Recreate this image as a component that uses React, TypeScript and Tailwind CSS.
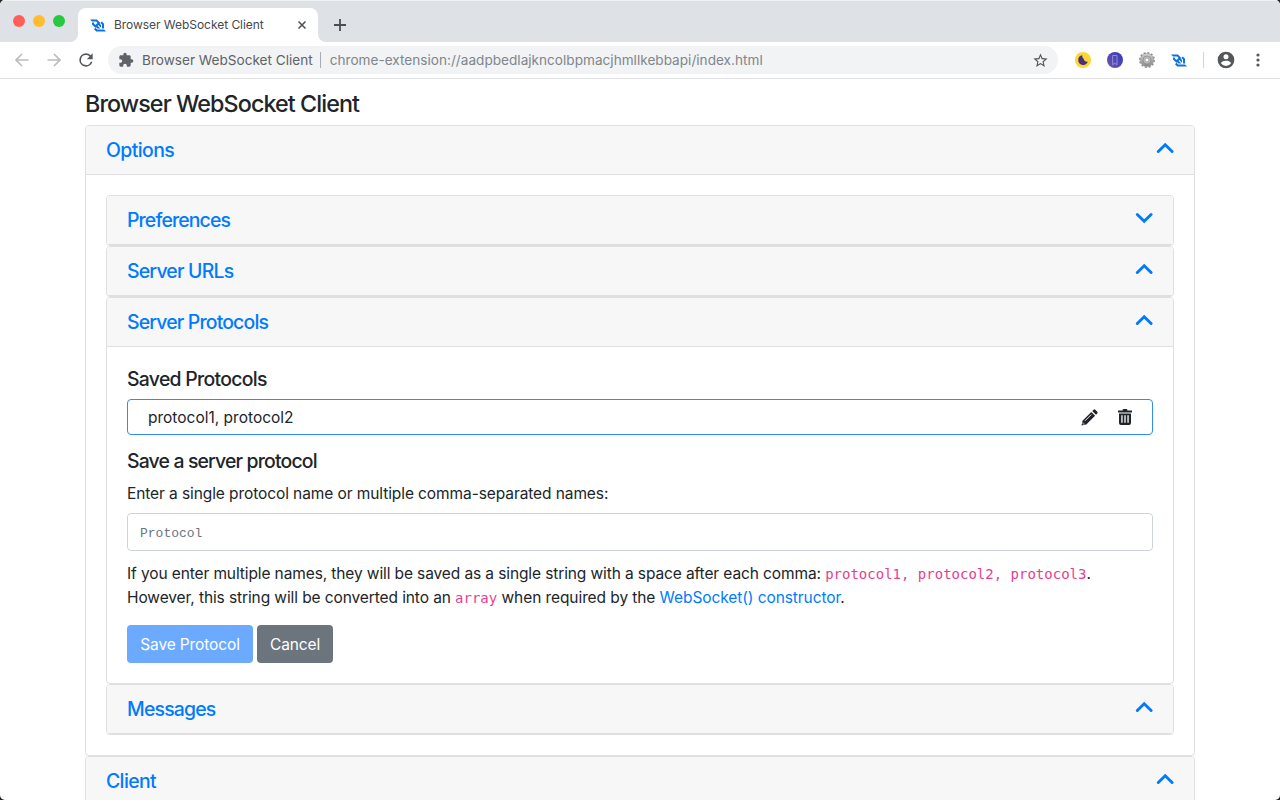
import type { ReactNode } from 'react';

function SocketLogo({ className }: { className: string }) {
  return (
    <svg viewBox="0 0 256 193" className={className} fill="#0b72e0">
      <path d="M192.44 144.64h31.78V68.34l-35.8-35.81-22.48 22.48 26.5 26.5v63.13zm31.86 15.94H113.45l-26.5-26.5 11.24-11.24 21.89 21.89h45.02l-44.35-44.44 11.32-11.32 44.35 44.35V88.3l-21.8-21.8 11.16-11.16L110.68 0H0l31.7 31.7v.08h65.74l23.22 23.23L86.7 88.97 63.48 65.74V47.71H31.7V78.9l55 55.01-22.39 22.39 35.81 35.8H256l-31.7-31.52z" />
    </svg>
  );
}

function Chevron({ down = false }: { down?: boolean }) {
  return (
    <svg width="18" height="12" viewBox="0 0 18 12" fill="none" stroke="#007bff" strokeWidth="2.9" className="relative -top-0.5">
      <path d={down ? 'M2.3 2.500 9.200 9.300l6.900-6.800' : 'M2.300 9.500l6.900-6.800 6.900 6.800'} strokeLinejoin="miter" strokeLinecap="round" />
    </svg>
  );
}

function Header({ title, track, down }: { title: string; track: string; down?: boolean }) {
  return (
    <div className="flex h-[49px] items-center justify-between border-b border-[#dfdfdf] bg-[#f7f7f7] px-5">
      <h2 className={`pb-px text-[19.4px] leading-6 font-[460] text-[#007bff] ${track}`}>{title}</h2>
      <Chevron down={down} />
    </div>
  );
}

function Card({ children }: { children: ReactNode }) {
  return (
    <section className="overflow-hidden rounded border border-[#dfdfdf] bg-white">
      {children}
    </section>
  );
}

function BrowserBar() {
  return (
    <header className="shrink-0">
      <div className="flex h-[42px] bg-[#dee1e6] shadow-[inset_0_1px_0_#f0f1f3]">
        <div className="flex w-[70px] gap-2 pt-[15px] pl-[13px]">
          <i className="size-3 rounded-full bg-[#ff5f57]" />
          <i className="size-3 rounded-full bg-[#febc2e]" />
          <i className="size-3 rounded-full bg-[#28c840]" />
        </div>
        <svg width="8" height="8" className="mt-[34px]" fill="#fff"><path d="M8 0v8H0a8 8 0 0 0 8-8z" /></svg>
        <div className="mt-2 flex w-60 items-center rounded-t-lg bg-white pl-3">
          <SocketLogo className="h-[13px] w-[16px]" />
          <span className="ml-2 text-[12px] tracking-[-0.04px] whitespace-nowrap text-[#45494d]">Browser WebSocket Client</span>
          <svg width="8" height="8" viewBox="0 0 8 8" stroke="#4b4f54" strokeWidth="1.5" className="mr-3 ml-auto"><path d="m.5.5 7 7m0-7-7 7" /></svg>
        </div>
        <svg width="8" height="8" className="mt-[34px]" fill="#fff"><path d="M0 0v8h8a8 8 0 0 1-8-8z" /></svg>
        <svg width="12" height="12" viewBox="0 0 12 12" stroke="#4b4f54" strokeWidth="1.8" className="mt-[19px] ml-2"><path d="M6 0v12M0 6h12" /></svg>
      </div>
      <div className="flex h-[37px] items-center border-b border-[#dfe0e2] bg-white pr-[18px] pl-[15px]">
        <svg width="14" height="14" viewBox="0 0 14 14" fill="none" stroke="#babcbe" strokeWidth="1.6"><path d="M13.5 7H1.5M7 1 1 7l6 6" /></svg>
        <svg width="14" height="14" viewBox="0 0 14 14" fill="none" stroke="#babcbe" strokeWidth="1.6" className="ml-[18px]"><path d="M.5 7h12M7 1l6 6-6 6" /></svg>
        <svg width="20" height="20" viewBox="0 0 24 24" fill="#54585d" className="ml-[15px]"><path d="M17.65 6.35A7.96 7.96 0 0 0 12 4a8 8 0 1 0 7.73 10h-2.08A6 6 0 1 1 12 6c1.66 0 3.14.69 4.22 1.78L13 11h7V4l-2.35 2.35z" /></svg>
        <div className="ml-[12px] flex h-7 w-[950px] items-center rounded-full bg-[#f1f3f4] pr-[9px] pl-[10px] text-[13.6px] whitespace-nowrap">
          <svg width="16" height="16" viewBox="0 0 24 24" fill="#5f6368"><path d="M20.5 11H19V7c0-1.100-.9-2-2-2h-4V3.500a2.500 2.500 0 0 0-5 0V5H4c-1.100 0-1.990.9-1.990 2v3.800H3.500c1.490 0 2.700 1.210 2.700 2.700s-1.210 2.700-2.700 2.700H2V20c0 1.100.9 2 2 2h3.800v-1.500c0-1.490 1.210-2.700 2.700-2.700 1.490 0 2.700 1.210 2.700 2.700V22H17c1.100 0 2-.9 2-2v-4h1.500a2.500 2.500 0 0 0 0-5z" /></svg>
          <span className="ml-[8px] text-[#5f6368]">Browser WebSocket Client</span>
          <i className="mr-[9px] ml-[7px] h-4 w-px bg-[#a9acb0]" />
          <span className="tracking-[0.01px] text-[#80868b]">chrome-extension://aadpbedlajkncolbpmacjhmllkebbapi/index.html</span>
          <svg width="17" height="17" viewBox="0 0 24 24" fill="#54585d" className="ml-auto"><path d="m22 9.240-7.190-.62L12 2 9.190 8.630 2 9.240l5.460 4.730L5.820 21 12 17.270 18.180 21l-1.630-7.030L22 9.240zM12 15.400l-3.760 2.270 1-4.280-3.320-2.880 4.380-.38L12 6.100l1.710 4.040 4.380.38-3.320 2.880 1 4.280L12 15.400z" /></svg>
        </div>
        <svg width="16" height="16" viewBox="0 0 16 16" className="ml-[17px]"><circle cx="8" cy="8" r="8" fill="#fdd535" /><path d="M7.300 3.200a4.900 4.900 0 1 0 5.500 6.300A3.200 3.200 0 0 1 8.700 7 3.500 3.500 0 0 1 7.300 3.200z" fill="#46307c" /></svg>
        <svg width="16" height="16" viewBox="0 0 16 16" className="ml-4">
          <defs><linearGradient id="mark" x1="1" y1="0" x2="0" y2="1"><stop stopColor="#3038c0" /><stop offset="1" stopColor="#7056a8" /></linearGradient></defs>
          <circle cx="8" cy="8" r="8" fill="url(#mark)" /><path d="M5.700 3.500h4.300v9.300L7.850 11.200 5.700 12.800z" fill="none" stroke="#a7a0e2" strokeWidth=".8" />
        </svg>
        <svg width="16" height="16" viewBox="0 0 16 16" className="ml-4">
          <defs><linearGradient id="steel" x1="0" y1="0" x2="0" y2="1"><stop stopColor="#cfcfcf" /><stop offset="1" stopColor="#888" /></linearGradient></defs>
          <circle cx="8" cy="8" r="7.200" fill="none" stroke="#8b8b8b" strokeWidth="1.500" strokeDasharray="2.170 1.600" />
          <circle cx="8" cy="8" r="6.600" fill="url(#steel)" stroke="#999" strokeWidth=".6" />
          <circle cx="8" cy="8" r="4" fill="#bdbdbd" stroke="#8a8a8a" strokeWidth=".7" />
          <circle cx="8" cy="8" r="2" fill="#fff" stroke="#999" strokeWidth=".8" />
        </svg>
        <SocketLogo className="ml-[16px] h-[13px] w-[16px]" />
        <i className="ml-4 h-4 w-px bg-[#d3d5d8]" />
        <svg width="20" height="20" viewBox="0 0 24 24" fill="#54585d" className="ml-[12px]"><path d="M12 2a10 10 0 1 0 0 20 10 10 0 0 0 0-20zm0 3a3 3 0 1 1 0 6 3 3 0 0 1 0-6zm0 14.200a7.200 7.200 0 0 1-6-3.220c.03-1.990 4-3.080 6-3.080s5.970 1.090 6 3.080a7.200 7.200 0 0 1-6 3.220z" /></svg>
        <svg width="4" height="14" viewBox="0 0 4 14" fill="#54585d" className="ml-[20px]"><circle cx="2" cy="2" r="1.600" /><circle cx="2" cy="7" r="1.600" /><circle cx="2" cy="12" r="1.600" /></svg>
      </div>
    </header>
  );
}

function ProtocolPanel() {
  return (
    <div className="h-[336px] px-5 pt-5 text-[15.5px] leading-6 text-[#212529]">
      <h3 className="text-[19.4px] leading-6 font-[460] tracking-[-0.7px]">Saved Protocols</h3>
      <div className="mt-2 flex h-9 items-center rounded border border-[#2f8cf0] pr-5 pl-[20px]">
        <span className="pt-0.5">protocol1, protocol2</span>
        <svg width="17" height="17" viewBox="0 0 17 17" className="ml-auto" fill="#212529">
          <path d="M.5 16.500 1.500 11.700 10.300 2.900 14.100 6.700 5.300 15.500zM11.200 2 12.600.7q.9-.7 1.700 0l2 2q.7.900 0 1.700L15 5.800z" />
          <path d="m4 11.800 6.300-6.300" stroke="#fff" strokeWidth=".9" />
          <path d="M1.900 13.300v1.800h1.800" fill="none" stroke="#fff" strokeWidth=".6" />
        </svg>
        <svg width="14" height="16" viewBox="0 0 14 16" className="ml-5" fill="#212529">
          <path fillRule="evenodd" d="M4.700 1.500V.8q0-.8.800-.8h3q.8 0 .8.800v.7H14v2H0v-2zM1 4.500h12V14q0 2-2 2H3q-2 0-2-2zm2.300 1.800v7.500h1.300V6.300zm3.050 0v7.500h1.300V6.300zm3.050 0v7.500h1.300V6.300z" />
        </svg>
      </div>
      <h3 className="mt-[14px] text-[19.4px] leading-6 font-[460] tracking-[-0.83px]">Save a server protocol</h3>
      <p className="mt-[9px] tracking-[-0.09px] whitespace-nowrap">Enter a single protocol name or multiple comma-separated names:</p>
      <input placeholder="Protocol" className="mt-[7px] block h-[38px] w-full rounded border border-[#ced4da] px-3 pt-[3px] font-['Liberation_Mono',monospace] text-[13px] placeholder:text-[#6c757d]" />
      <p className="mt-[11px] whitespace-nowrap">
        <span className="tracking-[-0.11px]">If you enter multiple names, they will be saved as a single string with a space after each comma: </span>
        <code className="font-['DejaVu_Sans_Mono',monospace] text-[14px] text-[#e83e8c]">protocol1, protocol2, protocol3</code>.
        <br />
        <span className="tracking-[-0.1px]">However, this string will be converted into an </span>
        <code className="font-['DejaVu_Sans_Mono',monospace] text-[14px] text-[#e83e8c]">array</code>
        <span className="tracking-[-0.08px]"> when required by the <a className="text-[#007bff]">WebSocket() constructor</a>.</span>
      </p>
      <div className="mt-[15px] flex gap-1 tracking-[-0.12px] text-white">
        <button className="h-[38px] w-[126px] rounded bg-[#6caaff] pt-0.5 whitespace-nowrap">Save Protocol</button>
        <button className="h-[38px] w-[76px] rounded bg-[#6c757d] pt-0.5">Cancel</button>
      </div>
    </div>
  );
}

export default function App() {
  return (
    <div className="bg-[#222]">
      <div className="flex h-[800px] w-[1280px] flex-col overflow-hidden rounded-[5px] bg-white font-['Inter',sans-serif]">
        <BrowserBar />
        <main className="mx-auto w-[1110px] pt-[10px]">
          <h1 className="text-[23.3px] leading-[29px] font-[460] tracking-[-0.91px] text-[#212529]">Browser WebSocket Client</h1>
          <div className="mt-[7px]">
            <Card>
              <Header title="Options" track="tracking-[-0.58px]" />
              <div className="px-5 py-5">
                <Card><Header title="Preferences" track="tracking-[-0.85px]" down /></Card>
                <Card><Header title="Server URLs" track="tracking-[-0.78px]" /></Card>
                <Card>
                  <Header title="Server Protocols" track="tracking-[-0.82px]" />
                  <ProtocolPanel />
                </Card>
                <Card><Header title="Messages" track="tracking-[-0.8px]" /></Card>
              </div>
            </Card>
            <Card><Header title="Client" track="tracking-[-0.6px]" /></Card>
          </div>
        </main>
      </div>
    </div>
  );
}
